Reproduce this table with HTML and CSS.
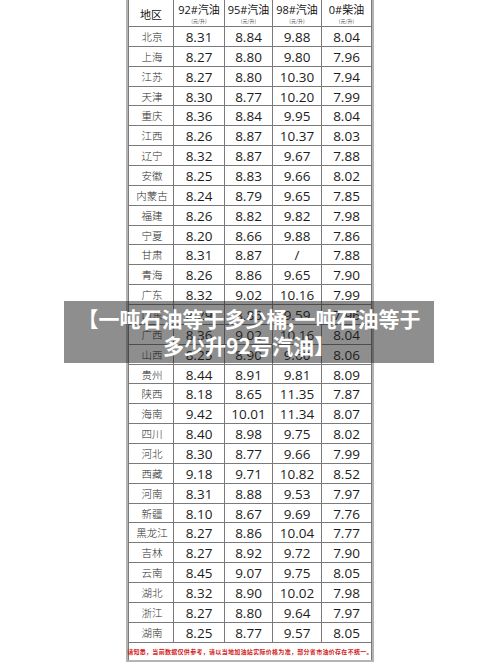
FILE: index.html
```html
<!DOCTYPE html>
<html lang="zh-CN">
<head>
<meta charset="utf-8">
<title>油价表</title>
<link rel="stylesheet" href="styles.css">
</head>
<body>
<div class="page">
  <div class="frame">
    <div class="grid">
      <div class="cell head region-head">地区</div>
      <div class="cell head"><span class="h-main">92#汽油</span><span class="h-sub">(元/升)</span></div>
      <div class="cell head"><span class="h-main">95#汽油</span><span class="h-sub">(元/升)</span></div>
      <div class="cell head"><span class="h-main">98#汽油</span><span class="h-sub">(元/升)</span></div>
      <div class="cell head"><span class="h-main">0#柴油</span><span class="h-sub">(元/升)</span></div>

      <div class="cell name">北京</div><div class="cell num">8.31</div><div class="cell num">8.84</div><div class="cell num">9.88</div><div class="cell num">8.04</div>
      <div class="cell name">上海</div><div class="cell num">8.27</div><div class="cell num">8.80</div><div class="cell num">9.80</div><div class="cell num">7.96</div>
      <div class="cell name">江苏</div><div class="cell num">8.27</div><div class="cell num">8.80</div><div class="cell num">10.30</div><div class="cell num">7.94</div>
      <div class="cell name">天津</div><div class="cell num">8.30</div><div class="cell num">8.77</div><div class="cell num">10.20</div><div class="cell num">7.99</div>
      <div class="cell name">重庆</div><div class="cell num">8.36</div><div class="cell num">8.84</div><div class="cell num">9.95</div><div class="cell num">8.04</div>
      <div class="cell name">江西</div><div class="cell num">8.26</div><div class="cell num">8.87</div><div class="cell num">10.37</div><div class="cell num">8.03</div>
      <div class="cell name">辽宁</div><div class="cell num">8.32</div><div class="cell num">8.87</div><div class="cell num">9.67</div><div class="cell num">7.88</div>
      <div class="cell name">安徽</div><div class="cell num">8.25</div><div class="cell num">8.83</div><div class="cell num">9.66</div><div class="cell num">8.02</div>
      <div class="cell name">内蒙古</div><div class="cell num">8.24</div><div class="cell num">8.79</div><div class="cell num">9.65</div><div class="cell num">7.85</div>
      <div class="cell name">福建</div><div class="cell num">8.26</div><div class="cell num">8.82</div><div class="cell num">9.82</div><div class="cell num">7.98</div>
      <div class="cell name">宁夏</div><div class="cell num">8.20</div><div class="cell num">8.66</div><div class="cell num">9.88</div><div class="cell num">7.86</div>
      <div class="cell name">甘肃</div><div class="cell num">8.31</div><div class="cell num">8.87</div><div class="cell num">/</div><div class="cell num">7.88</div>
      <div class="cell name">青海</div><div class="cell num">8.26</div><div class="cell num">8.86</div><div class="cell num">9.65</div><div class="cell num">7.90</div>
      <div class="cell name">广东</div><div class="cell num">8.32</div><div class="cell num">9.02</div><div class="cell num">10.16</div><div class="cell num">7.99</div>
      <div class="cell name">山东</div><div class="cell num">8.29</div><div class="cell num">8.86</div><div class="cell num">9.59</div><div class="cell num">7.96</div>
      <div class="cell name">广西</div><div class="cell num">8.36</div><div class="cell num">9.02</div><div class="cell num">10.16</div><div class="cell num">8.04</div>
      <div class="cell name">山西</div><div class="cell num">8.25</div><div class="cell num">8.90</div><div class="cell num">9.60</div><div class="cell num">8.06</div>
      <div class="cell name">贵州</div><div class="cell num">8.44</div><div class="cell num">8.91</div><div class="cell num">9.81</div><div class="cell num">8.09</div>
      <div class="cell name">陕西</div><div class="cell num">8.18</div><div class="cell num">8.65</div><div class="cell num">11.35</div><div class="cell num">7.87</div>
      <div class="cell name">海南</div><div class="cell num">9.42</div><div class="cell num">10.01</div><div class="cell num">11.34</div><div class="cell num">8.07</div>
      <div class="cell name">四川</div><div class="cell num">8.40</div><div class="cell num">8.98</div><div class="cell num">9.75</div><div class="cell num">8.02</div>
      <div class="cell name">河北</div><div class="cell num">8.30</div><div class="cell num">8.77</div><div class="cell num">9.66</div><div class="cell num">7.99</div>
      <div class="cell name">西藏</div><div class="cell num">9.18</div><div class="cell num">9.71</div><div class="cell num">10.82</div><div class="cell num">8.52</div>
      <div class="cell name">河南</div><div class="cell num">8.31</div><div class="cell num">8.88</div><div class="cell num">9.53</div><div class="cell num">7.97</div>
      <div class="cell name">新疆</div><div class="cell num">8.10</div><div class="cell num">8.67</div><div class="cell num">9.69</div><div class="cell num">7.76</div>
      <div class="cell name">黑龙江</div><div class="cell num">8.27</div><div class="cell num">8.86</div><div class="cell num">10.04</div><div class="cell num">7.77</div>
      <div class="cell name">吉林</div><div class="cell num">8.27</div><div class="cell num">8.92</div><div class="cell num">9.72</div><div class="cell num">7.90</div>
      <div class="cell name">云南</div><div class="cell num">8.45</div><div class="cell num">9.07</div><div class="cell num">9.75</div><div class="cell num">8.05</div>
      <div class="cell name">湖北</div><div class="cell num">8.32</div><div class="cell num">8.90</div><div class="cell num">10.02</div><div class="cell num">7.98</div>
      <div class="cell name">浙江</div><div class="cell num">8.27</div><div class="cell num">8.80</div><div class="cell num">9.64</div><div class="cell num">7.97</div>
      <div class="cell name">湖南</div><div class="cell num">8.25</div><div class="cell num">8.77</div><div class="cell num">9.57</div><div class="cell num">8.05</div>

      <div class="cell note">请知悉，当前数据仅供参考，请以当地加油站实际价格为准，部分省市油价存在不统一。</div>
    </div>
  </div>
  <div class="banner">【一吨石油等于多少桶,一吨石油等于多少升92号汽油】</div>
</div>
</body>
</html>
```
FILE: styles.css
```css
html, body {
  margin: 0;
  padding: 0;
  background: #ffffff;
}

.page {
  position: relative;
  width: 500px;
  height: 666px;
  overflow: hidden;
  background: #ffffff;
}

.frame {
  margin-left: 126px;
  width: 244px;
  border-left: 2px solid #b4b4b4;
  border-right: 2px solid #b4b4b4;
  border-bottom: 2px solid #b4b4b4;
}

.grid {
  display: grid;
  grid-template-columns: 44px 50px 47px 48px 49px;
  grid-template-rows: 26px repeat(31, 18.87px) 17px;
  gap: 1px;
  padding: 0 1px;
  background: #7a7a7a;
}

.cell {
  background: #ffffff;
  display: flex;
  align-items: center;
  justify-content: center;
  overflow: hidden;
  white-space: nowrap;
}

.head {
  flex-direction: column;
  font-family: "Open Sans", "Noto Sans CJK SC", sans-serif;
  color: #111111;
}

.region-head {
  font-family: "Noto Sans CJK SC", sans-serif;
  font-size: 11px;
  padding-top: 2px;
}

.h-main {
  font-size: 11px;
  line-height: 13px;
  margin-top: 1px;
}

.h-sub {
  font-family: "Noto Sans CJK SC", sans-serif;
  font-size: 5px;
  line-height: 7px;
  color: #555555;
  margin-top: 1px;
}

.name {
  font-family: "Noto Sans CJK SC", sans-serif;
  font-size: 10.5px;
  font-weight: 300;
  color: #2a2a2a;
  padding-left: 2px;
}

.num {
  font-family: "Open Sans", sans-serif;
  font-size: 13.5px;
  color: #1c1c1c;
  padding-top: 1px;
}

.note {
  grid-column: 1 / 6;
  font-family: "Noto Sans CJK SC", sans-serif;
  font-size: 6px;
  letter-spacing: 0.3px;
  color: #d31c1c;
  font-weight: 700;
  overflow: visible;
}

.banner {
  position: absolute;
  left: 64px;
  top: 301px;
  width: 370px;
  height: 62px;
  box-sizing: border-box;
  padding: 4px 12px;
  background: rgba(30, 30, 30, 0.5);
  color: #ffffff;
  font-family: "Noto Sans CJK SC", sans-serif;
  font-weight: 700;
  font-size: 21px;
  line-height: 27px;
  text-align: center;
}
```
